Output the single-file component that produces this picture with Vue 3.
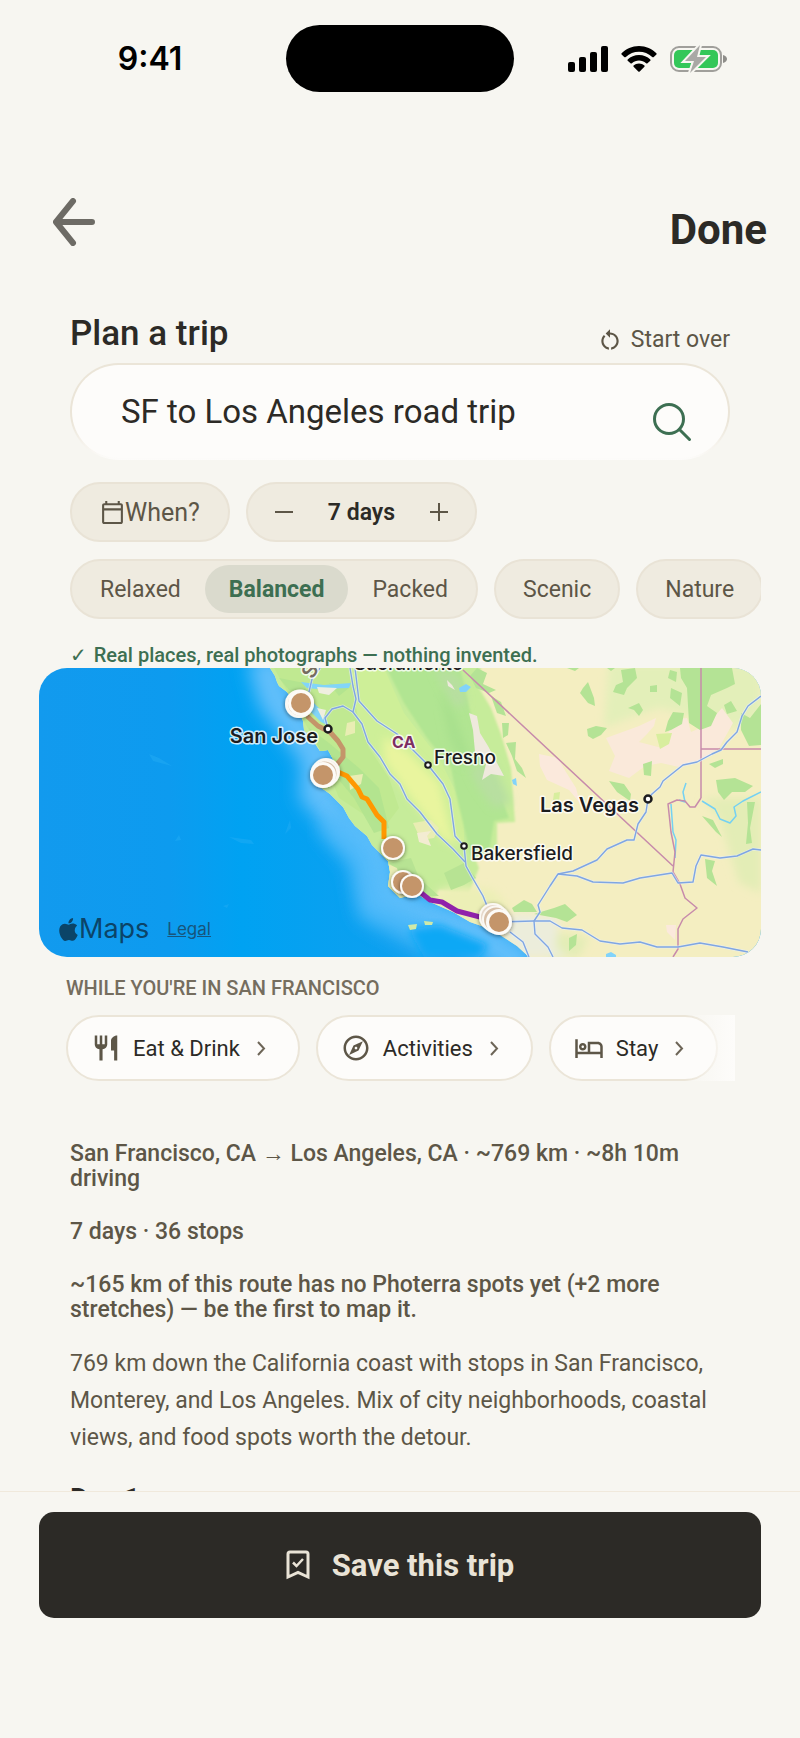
<template>
  <div class="screen">
    <div class="status-bar">
      <span class="status-time">9:41</span>
      <span class="island"></span>
      <div class="status-icons">
        <svg width="40" height="26" viewBox="0 0 40 26" aria-hidden="true">
          <rect x="0" y="16" width="7" height="10" rx="2" />
          <rect x="11" y="11" width="7" height="15" rx="2" />
          <rect x="22" y="6" width="7" height="20" rx="2" />
          <rect x="33" y="0" width="7" height="26" rx="2" />
        </svg>
        <svg width="36" height="26" viewBox="0 0 36 26" aria-hidden="true">
          <path d="M18 0C11 0 5 3 .6 7.200Q0 8 .6 8.600L3.200 11Q4 11.600 4.800 11C8.500 7.600 13 5.800 18 5.800S27.500 7.600 31.200 11Q32 11.600 32.800 11L35.400 8.600Q36 8 35.400 7.200C31 3 25 0 18 0Z" />
          <path d="M18 9C13.500 9 9.700 10.700 6.700 13.400Q6.100 14.100 6.700 14.700L9.500 17.300Q10.200 17.800 10.900 17.300C13 15.500 15.300 14.600 18 14.600S23 15.500 25.100 17.300Q25.800 17.800 26.500 17.300L29.300 14.700Q29.900 14.100 29.300 13.400C26.300 10.700 22.500 9 18 9Z" />
          <path d="M18 17.600C15.900 17.600 14 18.400 12.600 19.500Q12 20.100 12.600 20.700L17.300 25.400Q18 26 18.700 25.400L23.400 20.700Q24 20.100 23.400 19.500C22 18.400 20.100 17.600 18 17.600Z" />
        </svg>
        <svg width="57" height="28" viewBox="0 0 57 28" aria-hidden="true">
          <rect x="1" y="2" width="50" height="24" rx="8" fill="none" stroke="#a09f9b" stroke-width="2" />
          <path d="M53 10C56 11 57 12.500 57 14S56 17 53 18Z" fill="#8e8d89" />
          <rect x="4" y="5" width="44" height="18" rx="5" fill="#34c759" />
          <path d="M30 0L15 16H24L20 28L36 12H27Z" fill="#a9a8a5" stroke="#f7f6f1" stroke-width="4" paint-order="stroke" />
        </svg>
      </div>
    </div>

    <main class="content">
      <header class="top-nav">
        <button class="back-btn" aria-label="Back">
          <svg width="42" height="48" viewBox="0 0 42 48" fill="none" stroke="#6d6b65" stroke-width="6" stroke-linecap="round" stroke-linejoin="round" aria-hidden="true">
            <path d="M20 3L3 24L20 45M4 24H39" />
          </svg>
        </button>
        <button class="done-btn">Done</button>
      </header>

      <section class="planner">
        <div class="title-row">
          <h1>Plan a trip</h1>
          <button class="start-over" @click="startOver">
            <svg width="26" height="26" viewBox="0 0 24 24" fill="currentColor" aria-hidden="true">
              <path d="M12 5V2L8 6l4 4V7c3.310 0 6 2.690 6 6 0 2.970-2.170 5.430-5 5.910v2.020c3.950-.49 7-3.850 7-7.930 0-4.420-3.580-8-8-8zM6 13c0-1.650.67-3.150 1.760-4.240L6.340 7.340C4.900 8.790 4 10.790 4 13c0 4.080 3.050 7.440 7 7.930v-2.020c-2.830-.48-5-2.940-5-5.910z" />
            </svg>
            Start over
          </button>
        </div>

        <form class="search-box" @submit.prevent>
          <input v-model="query" type="text" aria-label="Trip">
          <button type="submit" aria-label="Search">
            <svg width="40" height="40" viewBox="0 0 40 40" fill="none" stroke="#3d6f52" stroke-width="3" stroke-linecap="round" aria-hidden="true">
              <circle cx="17" cy="17" r="14.500" />
              <path d="M27.500 27.500L37.500 37.500" />
            </svg>
          </button>
        </form>

        <div class="option-row">
          <button class="pill when-btn">
            <svg width="25" height="25" viewBox="0 0 24 24" fill="currentColor" aria-hidden="true">
              <path d="M20 3h-1V1h-2v2H7V1H5v2H4c-1.100 0-2 .9-2 2v16c0 1.100.9 2 2 2h16c1.100 0 2-.9 2-2V5c0-1.100-.9-2-2-2zm0 18H4V10h16v11zm0-13H4V5h16v3z" />
            </svg>
            When?
          </button>
          <div class="pill stepper">
            <button aria-label="Fewer days" @click="changeDays(-1)">
              <svg width="20" height="20" viewBox="0 0 20 20" stroke="currentColor" stroke-width="2" aria-hidden="true"><path d="M1 10H19" /></svg>
            </button>
            <strong>{{ days }} days</strong>
            <button aria-label="More days" @click="changeDays(1)">
              <svg width="20" height="20" viewBox="0 0 20 20" stroke="currentColor" stroke-width="2" aria-hidden="true"><path d="M1 10H19M10 1V19" /></svg>
            </button>
          </div>
        </div>
      </section>

      <div class="option-row style-row">
        <div class="pill pace-group" role="radiogroup" aria-label="Pace">
          <label
            v-for="option in paces"
            :key="option"
            class="pace-option"
            :class="{ active: pace === option }"
          >
            <input v-model="pace" type="radio" name="pace" :value="option">
            {{ option }}
          </label>
        </div>
        <button v-for="tag in tags" :key="tag" class="pill tag-btn">{{ tag }}</button>
      </div>

      <p class="promise"><span class="tick">✓</span>Real places, real photographs — nothing invented.</p>

      <div class="map-card">
        <svg class="map" viewBox="0 0 722 289" preserveAspectRatio="xMidYMid slice" role="img" aria-label="Route map">
          <defs>
            <linearGradient id="sea" x1="0" x2="1" y1="0" y2="0">
              <stop offset="0" stop-color="#129aee" />
              <stop offset=".18" stop-color="#0d9bef" />
              <stop offset=".28" stop-color="#00a2f2" />
              <stop offset=".6" stop-color="#159fee" />
            </linearGradient>
            <filter id="soft" x="-20%" y="-20%" width="140%" height="140%"><feGaussianBlur stdDeviation="9" /></filter>
            <filter id="haze" x="-20%" y="-20%" width="140%" height="140%"><feGaussianBlur stdDeviation="4" /></filter>
            <filter id="edge" x="-20%" y="-20%" width="140%" height="140%"><feGaussianBlur stdDeviation="1" /></filter>
            <filter id="drop" x="-30%" y="-30%" width="160%" height="160%"><feDropShadow dx="0" dy="1" stdDeviation="2" flood-opacity=".5" /></filter>
            <clipPath id="land-clip"><path :d="landPath" /></clipPath>
          </defs>

          <rect width="722" height="289" fill="url(#sea)" />
          <path d="M225 -10L236 30L258 60L280 90L278 125L305 155L335 185L342 230L380 245L430 262L490 300" fill="none" stroke="#62bffb" stroke-width="34" filter="url(#soft)" />
          <path d="M290 150L325 190L335 240L400 275" fill="none" stroke="#4fbafa" stroke-width="34" opacity=".7" filter="url(#soft)" />
          <path d="M370 262L400 257L450 277L440 289H385Z" fill="#0da8f5" filter="url(#haze)" />
          <g fill="#25aef5" opacity=".45">
            <path d="M110 86L120 90L133 98L114 93Z" />
            <path d="M190 169L212 172L215 176L202 175Z" />
            <path d="M246 166L251 152L252 160Z" />
            <path d="M136 173L140 167L142 172Z" />
            <path d="M184 238L190 236L188 240Z" />
          </g>

          <path :d="landPath" fill="#f4eec1" />
          <g clip-path="url(#land-clip)">
            <path d="M225 -5H442L440 20L452 40L462 66L472 100L476 154L458 155L458 180L436 190L440 200L430 225L400 222L392 240L340 235L250 90Z" fill="#c6ec9a" filter="url(#edge)" />
            <path d="M425 218L400 222L392 250L450 262L470 240L455 222Z" fill="#ecefb6" filter="url(#haze)" />
            <path d="M310 0H345L365 45L400 90L425 140L425 175L405 170L370 130L335 80L315 45Z" fill="#ceef98" />
            <path d="M345 68L370 85L400 115L412 165L422 180L405 172L372 130L345 92Z" fill="#e9f59e" filter="url(#haze)" />
            <path d="M345 -5H420L428 30L435 60L455 110L470 150L455 153L450 185L432 188L418 130L412 100L388 70L365 35Z" fill="#b1e592" filter="url(#edge)" />
            <path d="M395 0L420 8L428 35L415 40Z M430 100L455 95L472 135L455 140L440 120Z" fill="#b8dfa0" filter="url(#haze)" />
            <path d="M400 20L415 45L430 85L426 100L410 70Z" fill="#a8e08d" filter="url(#haze)" />
            <path d="M235 0L310 0L318 45L330 80L350 110L360 140L345 160L300 130L280 80Z" fill="#c0e991" />
            <path d="M270 60L290 75L320 100L340 120L350 160L335 165L315 130L290 100Z M290 15L310 20L300 28Z M240 10L265 15L268 25L250 22Z" fill="#afe28e" opacity=".8" />
            <path d="M350 195L372 190L380 210L400 228L385 228L362 205Z M405 205L425 195L437 210L425 217L412 222Z" fill="#b7e393" />
            <path d="M349 196L358 200L362 215L375 224L362 230L349 220Z M374 155L392 152L400 160L395 170L382 172Z M308 55L316 53L316 65L306 68Z M310 108L324 106L322 116L311 122Z" fill="#e9edb3" />
            <!-- bay and inner water -->
            <path d="M262 14L285 17L312 15L310 20L278 21L268 20Z M272 32L284 44L290 58L282 54L272 44Z" fill="#82d5f8" />
            <path d="M278 19L298 20L290 27L280 25Z M278 40L287 42L284 52Z" fill="#efefdf" />
            <!-- alpine and dry ground -->
            <path d="M430 45L438 48L441 65L449 78L465 108L452 106L443 112L447 96L436 84L434 62Z M408 12L413 17L416 22L409 18Z" fill="#efe9dd" />
            <path d="M570 -5H722V48L700 60L660 50L620 40L590 50L565 60Z" fill="#e3efb9" filter="url(#haze)" />
            <path d="M664 130H722V225L700 215L680 150Z M505 262L550 270L540 289H510Z" fill="#e3edb6" filter="url(#haze)" />
            <path d="M567 70L600 58L617 50L615 58L608 66L600 74L623 80L635 52L648 50L652 64L668 57L683 40L694 55L680 80L664 92L640 99L622 95L606 98L590 110L570 103L576 88Z" fill="#fae9da" />
            <path d="M500 86L519 90L527 104L537 120L541 135L530 122L508 112L501 98Z M627 257H637L636 272L628 264Z" fill="#fbe9dc" />
            <path d="M378 165L392 163L388 168L392 178L380 174Z" fill="#f3ecd2" />
            <path d="M474 245L520 248L517 280L530 289H480L462 262Z" fill="#eceddb" filter="url(#haze)" />
            <!-- woodland -->
            <g fill="#b4e395">
              <path d="M438 0L448 5L444 16L457 22L450 25L437 20L431 8Z" />
              <path d="M641 0H693L696 16L688 20L672 27L668 38L678 45L672 58L661 62L650 55L648 20L642 10Z" />
              <path d="M582 2L596 0L598 10L588 20L585 27L574 24L577 17L584 14Z" />
              <path d="M544 20L549 14L555 30L556 38L549 35L541 25Z" />
              <path d="M631 2L638 4L637 14L629 10Z M632 20L643 25L641 38L631 30Z" />
              <path d="M589 40L600 35L604 42L600 48L595 42Z M629 53L634 44L645 45L643 56L632 62L626 64Z" />
              <path d="M548 61L557 58L568 60L562 67L554 71L549 68Z M611 18L618 17L618 24L611 24Z" />
              <path d="M702 45L711 50L722 36V77L710 78L702 62Z M685 37L692 33L698 43L688 46Z" />
              <path d="M463 55L470 55L469 67L464 70Z M467 75L477 74L476 91L483 100L487 110L478 103L473 88Z" />
              <path d="M452 28L462 34L467 48L458 45Z" />
              <path d="M570 113L585 116L592 126L591 133L578 124Z M604 96L613 93L612 108L605 107Z" />
              <path d="M473 240L485 232L493 236L498 244L475 244Z M495 246L515 240L526 236L538 247L528 254L517 250Z" />
              <path d="M530 270L538 266L537 277L530 283Z M666 191L676 193L673 203L678 218L668 210Z" />
              <path d="M677 112L696 110L714 118L706 124L693 124L685 132L679 124Z M708 134L716 134L711 160L713 175L707 176L709 155Z" />
              <path d="M663 148L674 152L683 169L677 164Z M670 96L684 91L684 96L676 100Z M528 0H540L536 3Z M568 0H576L572 3Z" />
            </g>
            <path d="M515 125L521 124L520 133L514 132Z M617 66L633 65L630 76L621 81Z" fill="#d8ee9e" />
            <path d="M420 20L427 16L432 19L427 24L421 24Z M473 112L477 110L478 118L474 116Z M567 286L572 284L577 287V289H567Z" fill="#82d3fa" />
          </g>
          <path d="M369 257L378 256L377 261L371 262Z M385 253L394 254L393 257L386 257Z" fill="#cfe9a8" />

          <g fill="none" stroke="#74d1f3" stroke-width="1.500" stroke-linejoin="round">
            <path d="M663 133L676 141L681 151L691 155L697 148L695 139L704 133L722 124" />
            <path d="M647 115L644 124L646 134L640 132M632 136L634 164L637 172L636 190" />
          </g>
          <g fill="none" stroke="#c78bab" stroke-width="1.500" stroke-linejoin="round">
            <path d="M424 2L634 198M662 0V130M662 81H722" />
            <path d="M662 130L656 139L651 139L646 133L638 132L629 136L632 164L636 184L634 204L641 216L646 230L658 240L644 251L639 261L639 281L634 289" />
          </g>
          <g fill="none" stroke="#e8f0fb" stroke-width="3" stroke-linejoin="round" opacity=".6">
            <path v-for="road in roads" :key="road" :d="road" />
          </g>
          <g fill="none" stroke="#7fa6e2" stroke-width="1.400" stroke-linejoin="round">
            <path v-for="road in roads" :key="road" :d="road" />
          </g>

          <g fill="none" stroke-width="5" stroke-linejoin="round">
            <path d="M268 48L279 58L291 64L299 73L304 81L304 89L296 99" stroke="#c4956a" />
            <path d="M299 104L308 108L319 121L323 129L328 131L338 147L345 154L345 171" stroke="#ff9800" />
            <path d="M381 224L391 232L403 234L418 243L441 249" stroke="#9022ab" />
          </g>

          <g class="map-labels">
            <g fill="#fff" stroke="#1c1c1e">
              <circle cx="289" cy="61" r="3.500" stroke-width="2.500" />
              <circle cx="389" cy="97" r="2.800" stroke-width="2" />
              <circle cx="425" cy="178" r="2.800" stroke-width="2" />
              <circle cx="609" cy="131" r="3.500" stroke-width="2.500" />
            </g>
            <text x="279" y="75" text-anchor="end" class="city">San Jose</text>
            <text x="600" y="144" text-anchor="end" class="city">Las Vegas</text>
            <text x="315" y="2" class="town">Sacramento</text>
            <text x="395" y="96" class="town">Fresno</text>
            <text x="432" y="192" class="town">Bakersfield</text>
            <text x="353" y="80" class="state">CA</text>
            <text x="267" y="10" class="bay" transform="rotate(-62 272 5)">S</text>
          </g>

          <g v-for="pin in pins" :key="pin.x" filter="url(#drop)">
            <circle v-if="pin.stack" :cx="pin.x + pin.stack[0]" :cy="pin.y + pin.stack[1]" :r="pin.r" fill="#e6d8ca" stroke="#fbf8f3" stroke-width="2" />
            <circle v-if="pin.stack" :cx="pin.x + pin.stack[0] / 2" :cy="pin.y + pin.stack[1] / 2" :r="pin.r" fill="#d8c0a8" stroke="#fbf8f3" stroke-width="2" />
            <circle :cx="pin.x" :cy="pin.y" :r="pin.r" fill="#fdfbf8" />
            <circle :cx="pin.x" :cy="pin.y" r="10" fill="#c4956a" />
          </g>
        </svg>
        <div class="map-credit">
          <svg width="19" height="23" viewBox="2 0 20 24" aria-hidden="true">
            <path d="M12.152 6.896c-.948 0-2.415-1.078-3.960-1.040-2.040.027-3.910 1.183-4.961 3.014-2.117 3.675-.546 9.103 1.519 12.090 1.013 1.454 2.208 3.090 3.792 3.039 1.520-.065 2.090-.987 3.935-.987 1.831 0 2.350.987 3.960.948 1.637-.026 2.676-1.480 3.676-2.948 1.156-1.688 1.636-3.325 1.662-3.415-.039-.013-3.182-1.221-3.220-4.857-.026-3.040 2.480-4.494 2.597-4.559-1.429-2.090-3.623-2.324-4.390-2.376-2-.156-3.675 1.090-4.610 1.090zM15.530 3.830c.843-1.012 1.400-2.427 1.245-3.830-1.207.052-2.662.805-3.532 1.818-.78.896-1.454 2.338-1.273 3.714 1.338.104 2.715-.688 3.559-1.701" fill="currentColor" />
          </svg>
          <span>Maps</span>
          <a href="#legal">Legal</a>
        </div>
      </div>

      <section class="nearby">
        <h2>WHILE YOU'RE IN SAN FRANCISCO</h2>
        <div class="nearby-list">
          <button v-for="item in nearby" :key="item.label" class="nearby-chip">
            <svg width="30" height="30" viewBox="0 0 24 24" fill="#5d5647" aria-hidden="true"><path :d="item.icon" /></svg>
            <span>{{ item.label }}</span>
            <svg width="9" height="15" viewBox="0 0 9 15" fill="none" stroke="#6d6557" stroke-width="2" aria-hidden="true"><path d="M1 1L7 7.500L1 14" /></svg>
          </button>
        </div>
      </section>

      <section class="summary">
        <p class="fact">San Francisco, CA → Los Angeles, CA · ~769 km · ~8h 10m driving</p>
        <p class="fact">{{ days }} days · 36 stops</p>
        <p class="fact">~165 km of this route has no Photerra spots yet (+2 more stretches) — be the first to map it.</p>
        <p class="intro">769 km down the California coast with stops in San Francisco, Monterey, and Los Angeles. Mix of city neighborhoods, coastal views, and food spots worth the detour.</p>
        <h2>Day 1</h2>
      </section>
    </main>

    <footer class="save-bar">
      <button class="save-btn">
        <svg width="24" height="30" viewBox="0 0 24 30" fill="none" stroke="currentColor" stroke-width="3" aria-hidden="true">
          <path d="M2 27V4Q2 2 4 2H20Q22 2 22 4V27L12 22.500Z" />
          <path d="M7 12.500L10.500 16L17 9" stroke-width="2.500" />
        </svg>
        Save this trip
      </button>
    </footer>
  </div>
</template>

<script setup>
import { ref } from 'vue'

const query = ref('SF to Los Angeles road trip')
const days = ref(7)
const pace = ref('Balanced')

const paces = ['Relaxed', 'Balanced', 'Packed']
const tags = ['Scenic', 'Nature']

const nearby = [
  {
    label: 'Eat & Drink',
    icon: 'M11 9H9V2H7v7H5V2H3v7c0 2.120 1.660 3.840 3.750 3.970V22h2.500v-9.030C11.340 12.840 13 11.120 13 9V2h-2v7zm5-3v8h2.500v8H21V2c-2.760 0-5 2.240-5 4z'
  },
  {
    label: 'Activities',
    icon: 'M12 2C6.480 2 2 6.480 2 12s4.480 10 10 10 10-4.480 10-10S17.520 2 12 2zm0 18c-4.410 0-8-3.590-8-8s3.590-8 8-8 8 3.590 8 8-3.590 8-8 8zm-5.500-2.500l7.510-3.490L17.500 6.500 9.990 9.990 6.500 17.500zm5.500-6.600c.61 0 1.100.49 1.100 1.100s-.49 1.100-1.100 1.100-1.100-.49-1.100-1.100.49-1.100 1.100-1.100z'
  },
  {
    label: 'Stay',
    icon: 'M7 14c1.660 0 3-1.340 3-3S8.660 8 7 8s-3 1.340-3 3 1.340 3 3 3zm0-4c.55 0 1 .45 1 1s-.45 1-1 1-1-.45-1-1 .45-1 1-1zm12-3h-8v8H3V5H1v15h2v-3h18v3h2v-9c0-2.210-1.790-4-4-4zm2 8h-8V9h6c1.100 0 2 .9 2 2v4z'
  }
]

// Map geometry, in the 722 x 289 space of the map svg
const landPath = 'M231 0L236 8L238 14L240 18L248 24L258 38L264 53L265 62L273 71L281 83L289 82L294 91L295 102L283 112L281 119L291 126L304 139L310 150L316 158L328 168L333 177L339 183L349 193L351 204L349 218L361 230L378 226L391 234L414 244L431 254L451 261L464 269L478 278L490 289H722V0Z'

const roads = [
  'M311 0L314 18L317 31L314 44L323 56L329 74L341 89L351 106L361 116L368 131L381 144L398 166L414 181L426 194',
  'M316 0L320 33L338 53L358 66L371 79L389 97L404 116L411 131L416 168L425 178L427 198L433 209L444 228L448 238L460 252',
  'M281 0L273 11L270 24',
  'M289 61L286 50L293 41L304 38L314 44',
  'M460 254L494 253L511 253L523 260L543 262L561 273L581 276L601 274L618 279L639 279L661 275L684 279L709 284',
  'M514 289L509 279L496 266L495 253L501 244L499 237L511 218L519 206L534 203L558 192L568 181L588 172L595 172L599 156L607 144L609 131L613 126L621 119L624 113L644 97L658 94L673 86L682 82L688 74L698 64L703 48L709 38L722 28',
  'M519 206L538 208L554 214L584 215L601 210L633 205L639 215L654 214L657 198L662 187L681 190L698 188L714 181L722 182',
  'M471 264L484 274L490 289'
]

const pins = [
  { x: 262, y: 35, r: 13, stack: [-2, 1] },
  { x: 284, y: 107, r: 13, stack: [3, -3] },
  { x: 354, y: 180, r: 12 },
  { x: 364, y: 214, r: 12 },
  { x: 373, y: 218, r: 12 },
  { x: 460, y: 254, r: 13, stack: [-6, -5] }
]

const changeDays = (step) => {
  days.value = Math.max(1, days.value + step)
}

const startOver = () => {
  query.value = ''
  days.value = 7
  pace.value = 'Balanced'
}
</script>

<style>
body {
  margin: 0;
  background: #f7f6f1;
}
</style>

<style scoped>
.screen {
  display: flex;
  flex-direction: column;
  height: 100vh;
  background: #f7f6f1;
  color: #2c2a26;
  font-family: Roboto, "Liberation Sans", sans-serif;
  font-size: 23px;
}

.screen * {
  box-sizing: border-box;
}

button {
  font: inherit;
  color: inherit;
  background: none;
  border: 0;
  padding: 0;
  cursor: pointer;
}

svg {
  display: block;
  flex: none;
}

h1,
h2,
p {
  margin: 0;
}

/* Status bar */
.status-bar {
  display: grid;
  grid-template-columns: 1fr 228px 1fr;
  align-items: center;
  justify-items: center;
  padding: 25px 0;
  color: #000;
  flex: none;
}

.status-time {
  font-family: Inter, sans-serif;
  font-size: 32px;
  font-weight: 600;
  padding-left: 14px;
}

.island {
  width: 100%;
  height: 67px;
  border-radius: 34px;
  background: #000;
}

.status-icons {
  display: flex;
  align-items: center;
  gap: 13px;
  padding-right: 20px;
}

/* Content */
.content {
  flex: 1;
  min-height: 0;
  overflow: hidden;
  padding: 81px 39px 0;
}

.top-nav {
  display: flex;
  justify-content: space-between;
  align-items: flex-start;
  margin: 0 -6px 0 14px;
}

.done-btn {
  font-size: 42px;
  font-weight: 700;
  line-height: 48px;
  padding-top: 8px;
}

.planner {
  padding: 60px 31px 0;
}

.title-row {
  display: flex;
  justify-content: space-between;
  align-items: flex-end;
  margin-bottom: 9px;
}

h1 {
  font-size: 35px;
  font-weight: 500;
  line-height: 40px;
}

.start-over {
  display: flex;
  align-items: center;
  gap: 8px;
  line-height: 28px;
  color: #5d5647;
}

.search-box {
  display: flex;
  align-items: center;
  height: 97px;
  padding: 0 36px 0 49px;
  background:
    linear-gradient(#fdfcfa, #fdfcfa) padding-box,
    linear-gradient(#ebe5d8 60%, #fdfcfa) border-box;
  border: 2px solid transparent;
  border-radius: 49px;
  margin-bottom: 22px;
}

.search-box input {
  flex: 1;
  min-width: 0;
  border: 0;
  outline: 0;
  padding: 0;
  background: none;
  color: inherit;
  font: inherit;
  font-size: 33px;
}

.search-box button {
  padding-top: 20px;
}

.option-row {
  display: flex;
  gap: 16px;
}

.pill {
  height: 60px;
  flex: none;
  border: 2px solid #e9e3d6;
  border-radius: 30px;
  background: #efebe0;
  color: #5d5647;
}

.when-btn {
  display: flex;
  align-items: center;
  padding: 0 28px;
  font-size: 25px;
}

.stepper {
  display: flex;
  align-items: center;
  padding: 0 26px;
  gap: 34px;
}

.stepper strong {
  font-size: 23px;
  font-weight: 600;
  color: #2c2a26;
}

.style-row {
  padding: 17px 0 23px 31px;
  overflow: hidden;
}

.pace-group {
  display: flex;
  padding: 4px;
}

.pace-option {
  display: flex;
  align-items: center;
  padding: 0 24px;
  border-radius: 24px;
  cursor: pointer;
}

.pace-option input {
  position: absolute;
  opacity: 0;
}

.pace-option.active {
  background: #dadacd;
  color: #3d6f52;
  font-weight: 700;
}

.tag-btn {
  padding: 0 27px;
}

.promise {
  padding-left: 31px;
  font-size: 20px;
  font-weight: 500;
  line-height: 26px;
  color: #3d6f52;
}

.tick {
  font-family: "DejaVu Sans", sans-serif;
  font-weight: 400;
  margin-right: 7px;
}

/* Map */
.map-card {
  position: relative;
  overflow: hidden;
  border-radius: 28px;
}

.map {
  width: 100%;
  height: auto;
}

.map-labels text {
  font-family: Inter, sans-serif;
  fill: #1c1c1e;
  stroke: #fff;
  stroke-width: 3px;
  stroke-linejoin: round;
  stroke-opacity: 0.8;
  paint-order: stroke;
}

.map-labels .city {
  font-size: 20px;
  font-weight: 600;
}

.map-labels .town {
  font-size: 19px;
  font-weight: 500;
}

.map-labels .state {
  font-size: 16px;
  font-weight: 700;
  fill: #7d2e62;
}

.map-labels .bay {
  font-size: 20px;
  font-weight: 600;
  fill: #756c60;
}

.map-credit {
  position: absolute;
  left: 20px;
  bottom: 12px;
  display: flex;
  align-items: center;
  color: #0b4468;
  font-family: Inter, sans-serif;
  font-size: 27px;
  line-height: 32px;
}

.map-credit span {
  margin: 0 18px 0 1px;
}

.map-credit a {
  color: #17557c;
  font-size: 17px;
}

/* Nearby */
.nearby {
  padding: 18px 26px 0 27px;
}

.nearby h2 {
  font-size: 20px;
  font-weight: 500;
  line-height: 26px;
  color: #756d5e;
  margin-bottom: 14px;
}

.nearby-list {
  position: relative;
  display: flex;
  gap: 16px;
  overflow: hidden;
}

.nearby-list::after {
  content: "";
  position: absolute;
  inset: 0 0 0 auto;
  width: 48px;
  background: linear-gradient(to right, rgba(253, 252, 250, 0), #fdfcfa);
  pointer-events: none;
}

.nearby-chip {
  display: flex;
  align-items: center;
  flex: none;
  height: 66px;
  padding: 0 32px 0 23px;
  gap: 12px;
  font-size: 22px;
  background: #fdfcfa;
  border: 2px solid #ebe5d8;
  border-radius: 33px;
}

.nearby-chip span {
  margin-right: 5px;
}

/* Summary */
.summary {
  padding: 60px 26px 0 31px;
  color: #5d5647;
}

.fact {
  font-weight: 500;
  line-height: 25px;
  margin-bottom: 28px;
}

.intro {
  line-height: 37px;
  margin: -5px 0 25px;
}

.summary h2 {
  font-size: 28px;
  font-weight: 600;
  line-height: 36px;
  color: #2c2a26;
}

/* Save bar */
.save-bar {
  flex: none;
  padding: 20px 39px 120px;
  border-top: 1px solid #f0e9dc;
}

.save-btn {
  display: flex;
  align-items: center;
  justify-content: center;
  gap: 22px;
  width: 100%;
  height: 106px;
  border-radius: 15px;
  background: #2c2a26;
  color: #e9e3d6;
  font-size: 31px;
  font-weight: 700;
}
</style>
